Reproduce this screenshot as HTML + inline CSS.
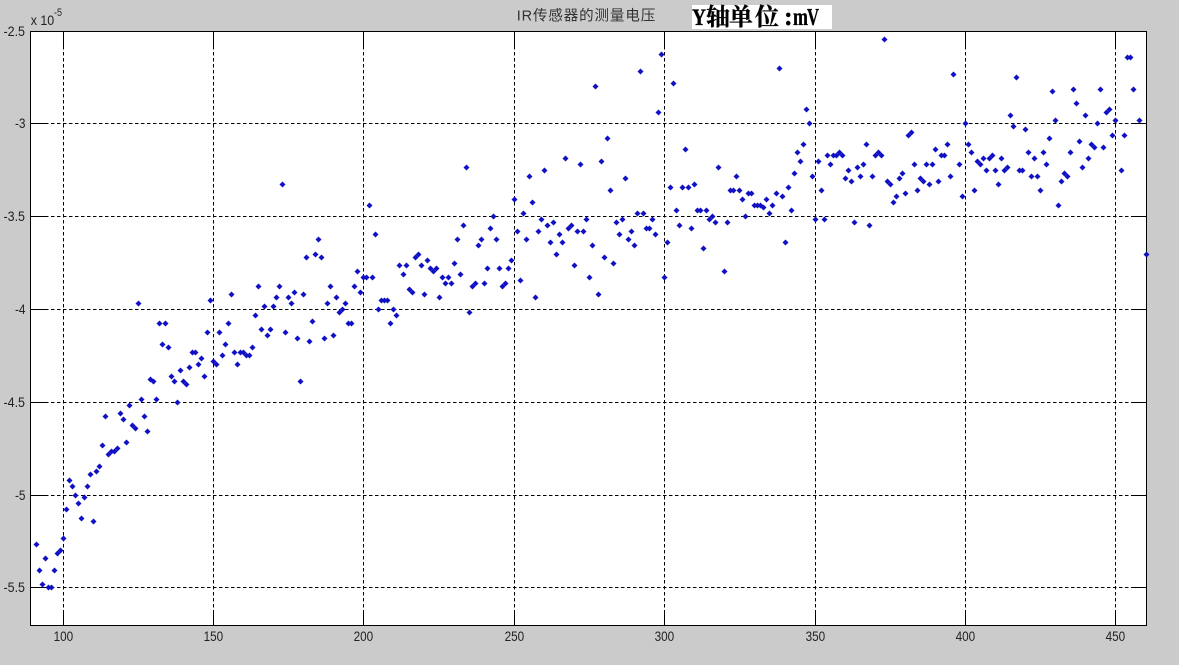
<!DOCTYPE html>
<html><head><meta charset="utf-8"><style>
html,body{margin:0;padding:0;background:#cbcbcb;width:1179px;height:665px;overflow:hidden}
svg{display:block;position:absolute;left:0;top:0}
.l{font-family:"Liberation Sans",sans-serif;font-size:13.5px;fill:#222}
.t{font-family:"Liberation Sans","Noto Sans CJK SC",sans-serif;font-size:14.5px;fill:#333}
.b{font-family:"Liberation Serif","Noto Serif CJK SC",serif;font-weight:bold;fill:#000;stroke:#000;stroke-width:.35}
</style></head><body>
<svg width="1179" height="665" viewBox="0 0 1179 665" xmlns="http://www.w3.org/2000/svg">
<defs><marker id="d" markerUnits="userSpaceOnUse" markerWidth="8" markerHeight="8" refX="4" refY="4" viewBox="0 0 8 8"><path d="M1 4 4 1 7 4 4 7z" fill="#1010c4"/></marker></defs>
<rect width="1179" height="665" fill="#cbcbcb"/>
<rect x="30.5" y="31.5" width="1116" height="594" fill="#fff"/>
<g stroke="#000" stroke-width="1" fill="none" stroke-dasharray="3.5 2.5">
<path d="M63.5 46V611M213.5 46V611M363.5 46V611M514.5 46V611M664.5 46V611M815.5 46V611M965.5 46V611M1115.5 46V611"/>
<path d="M45 123.5H1133M45 216.5H1133M45 309.5H1133M45 402.5H1133M45 495.5H1133M45 587.5H1133"/>
</g>
<g stroke="#000" stroke-width="1" fill="none">
<path d="M63.5 32V46M213.5 32V46M363.5 32V46M514.5 32V46M664.5 32V46M815.5 32V46M965.5 32V46M1115.5 32V46"/>
<path d="M63.5 611V625M213.5 611V625M363.5 611V625M514.5 611V625M664.5 611V625M815.5 611V625M965.5 611V625M1115.5 611V625"/>
<path d="M31 123.5H45M31 216.5H45M31 309.5H45M31 402.5H45M31 495.5H45M31 587.5H45"/>
<path d="M1133 123.5H1146M1133 216.5H1146M1133 309.5H1146M1133 402.5H1146M1133 495.5H1146M1133 587.5H1146"/>
<rect x="30.5" y="31.5" width="1116" height="594"/>
</g>
<polyline transform="translate(.2 .2)" fill="none" stroke="none" marker-start="url(#d)" marker-mid="url(#d)" marker-end="url(#d)" points="36.3,544.3 39.3,570.3 42.3,584.3 45.3,558.3 48.3,587.3 51.3,587.3 54.3,570.3 57.3,553.3 60.3,550.3 63.3,538.3 66.3,509.3 69.3,480.3 72.3,486.3 75.3,495.3 78.3,503.3 81.3,518.3 84.3,497.3 87.3,486.3 90.3,474.3 93.3,521.3 96.3,471.3 99.3,466.3 102.3,445.3 105.3,416.3 108.3,454.3 111.3,451.3 114.3,451.3 117.3,448.3 120.3,413.3 123.3,419.3 126.3,442.3 129.3,405.3 132.3,425.3 135.3,428.3 138.3,303.3 141.3,399.3 144.3,416.3 147.3,431.3 150.3,379.3 153.3,381.3 156.3,399.3 159.3,323.3 162.3,344.3 165.3,323.3 168.3,347.3 171.3,376.3 174.3,381.3 177.3,402.3 180.3,370.3 183.3,381.3 186.3,384.3 189.3,367.3 192.3,352.3 195.3,352.3 198.3,364.3 201.3,358.3 204.3,376.3 207.3,332.3 210.3,300.3 213.3,361.3 216.3,364.3 219.3,332.3 222.3,355.3 225.3,344.3 228.3,323.3 231.3,294.3 234.3,352.3 237.3,364.3 240.3,352.3 243.3,352.3 246.3,355.3 249.3,355.3 252.3,347.3 255.3,315.3 258.3,286.3 261.3,329.3 264.3,306.3 267.3,335.3 270.3,329.3 273.3,306.3 276.3,297.3 279.3,286.3 282.3,184.3 285.3,332.3 288.3,297.3 291.3,303.3 294.3,292.3 297.3,338.3 300.3,381.3 303.3,294.3 306.3,257.3 309.3,341.3 312.3,321.3 315.3,254.3 318.3,239.3 321.3,257.3 324.3,338.3 327.3,303.3 330.3,286.3 333.3,335.3 336.3,297.3 339.3,312.3 342.3,309.3 345.3,303.3 348.3,323.3 351.3,323.3 354.3,286.3 357.3,271.3 360.3,292.3 363.3,277.3 366.3,277.3 369.3,205.3 372.3,277.3 375.3,234.3 378.3,309.3 381.3,300.3 384.3,300.3 387.3,300.3 390.3,323.3 393.3,309.3 396.3,315.3 399.3,265.3 403.3,274.3 406.3,265.3 409.3,289.3 412.3,292.3 415.3,257.3 418.3,254.3 421.3,265.3 424.3,294.3 427.3,260.3 430.3,268.3 433.3,271.3 436.3,268.3 439.3,297.3 442.3,277.3 445.3,283.3 448.3,277.3 451.3,283.3 454.3,263.3 457.3,239.3 460.3,274.3 463.3,225.3 466.3,167.3 469.3,312.3 472.3,286.3 475.3,283.3 478.3,245.3 481.3,239.3 484.3,283.3 487.3,268.3 490.3,228.3 493.3,216.3 496.3,239.3 499.3,268.3 502.3,286.3 505.3,283.3 508.3,268.3 511.3,260.3 514.3,199.3 517.3,231.3 520.3,280.3 523.3,213.3 526.3,239.3 529.3,176.3 532.3,202.3 535.3,297.3 538.3,231.3 541.3,219.3 544.3,170.3 547.3,225.3 550.3,242.3 553.3,222.3 556.3,254.3 559.3,234.3 562.3,242.3 565.3,158.3 568.3,228.3 571.3,225.3 574.3,265.3 577.3,231.3 580.3,164.3 583.3,231.3 586.3,219.3 589.3,277.3 592.3,245.3 595.3,86.3 598.3,294.3 601.3,161.3 604.3,257.3 607.3,138.3 610.3,190.3 613.3,263.3 616.3,222.3 619.3,234.3 622.3,219.3 625.3,178.3 628.3,239.3 631.3,231.3 634.3,245.3 637.3,213.3 640.3,71.3 643.3,213.3 646.3,228.3 649.3,228.3 652.3,219.3 655.3,234.3 658.3,112.3 661.3,54.3 664.3,277.3 667.3,242.3 670.3,187.3 673.3,83.3 676.3,210.3 679.3,225.3 682.3,187.3 685.3,149.3 688.3,187.3 691.3,228.3 694.3,184.3 697.3,210.3 700.3,210.3 703.3,248.3 706.3,210.3 709.3,219.3 712.3,216.3 715.3,222.3 718.3,167.3 724.3,271.3 727.3,222.3 730.3,190.3 733.3,190.3 736.3,176.3 739.3,190.3 742.3,199.3 745.3,216.3 748.3,193.3 751.3,193.3 754.3,205.3 757.3,205.3 760.3,205.3 763.3,207.3 766.3,199.3 769.3,213.3 772.3,205.3 776.3,193.3 779.3,68.3 782.3,196.3 785.3,242.3 788.3,187.3 791.3,210.3 794.3,173.3 797.3,152.3 800.3,161.3 803.3,144.3 806.3,109.3 809.3,123.3 812.3,176.3 815.3,219.3 818.3,161.3 821.3,190.3 824.3,219.3 827.3,155.3 830.3,164.3 833.3,155.3 836.3,155.3 839.3,152.3 842.3,155.3 845.3,178.3 848.3,170.3 851.3,181.3 854.3,222.3 857.3,167.3 860.3,176.3 863.3,164.3 866.3,144.3 869.3,225.3 872.3,176.3 875.3,155.3 878.3,152.3 881.3,155.3 884.3,39.3 887.3,181.3 890.3,184.3 893.3,202.3 896.3,196.3 899.3,178.3 902.3,173.3 905.3,193.3 908.3,135.3 911.3,132.3 914.3,164.3 917.3,190.3 920.3,178.3 923.3,181.3 926.3,164.3 929.3,184.3 932.3,164.3 935.3,149.3 938.3,181.3 941.3,155.3 944.3,155.3 947.3,144.3 950.3,176.3 953.3,74.3 959.3,164.3 962.3,196.3 965.3,123.3 968.3,144.3 971.3,152.3 974.3,190.3 977.3,161.3 980.3,164.3 983.3,158.3 986.3,170.3 989.3,158.3 992.3,155.3 995.3,170.3 998.3,184.3 1001.3,158.3 1004.3,170.3 1007.3,167.3 1010.3,115.3 1013.3,126.3 1016.3,77.3 1019.3,170.3 1022.3,170.3 1025.3,129.3 1028.3,152.3 1031.3,176.3 1034.3,158.3 1037.3,176.3 1040.3,190.3 1043.3,152.3 1046.3,164.3 1049.3,138.3 1052.3,91.3 1055.3,120.3 1058.3,205.3 1061.3,181.3 1064.3,173.3 1067.3,176.3 1070.3,152.3 1073.3,89.3 1076.3,103.3 1079.3,141.3 1082.3,167.3 1085.3,115.3 1088.3,158.3 1091.3,144.3 1094.3,147.3 1097.3,123.3 1100.3,89.3 1103.3,147.3 1106.3,112.3 1109.3,109.3 1112.3,135.3 1115.3,120.3 1121.3,170.3 1124.3,135.3 1127.3,57.3 1130.3,57.3 1133.3,89.3 1139.3,120.3 1146.3,254.3"/>
<g class="l">
<text x="3.5" y="36" textLength="21.5" lengthAdjust="spacingAndGlyphs">-2.5</text>
<text x="15" y="128" textLength="10.5" lengthAdjust="spacingAndGlyphs">-3</text>
<text x="3.5" y="221" textLength="21.5" lengthAdjust="spacingAndGlyphs">-3.5</text>
<text x="15" y="314" textLength="10.5" lengthAdjust="spacingAndGlyphs">-4</text>
<text x="3.5" y="407" textLength="21.5" lengthAdjust="spacingAndGlyphs">-4.5</text>
<text x="15" y="500" textLength="10.5" lengthAdjust="spacingAndGlyphs">-5</text>
<text x="3.5" y="592" textLength="21.5" lengthAdjust="spacingAndGlyphs">-5.5</text>
<text x="53.6" y="641" textLength="19.6" lengthAdjust="spacingAndGlyphs">100</text>
<text x="203.6" y="641" textLength="19.6" lengthAdjust="spacingAndGlyphs">150</text>
<text x="353.6" y="641" textLength="19.6" lengthAdjust="spacingAndGlyphs">200</text>
<text x="504.6" y="641" textLength="19.6" lengthAdjust="spacingAndGlyphs">250</text>
<text x="654.6" y="641" textLength="19.6" lengthAdjust="spacingAndGlyphs">300</text>
<text x="805.6" y="641" textLength="19.6" lengthAdjust="spacingAndGlyphs">350</text>
<text x="955.6" y="641" textLength="19.6" lengthAdjust="spacingAndGlyphs">400</text>
<text x="1105.6" y="641" textLength="19.6" lengthAdjust="spacingAndGlyphs">450</text>
<text x="30.7" y="25" textLength="23.5" lengthAdjust="spacingAndGlyphs">x 10</text>
<text x="54" y="16" textLength="8" lengthAdjust="spacingAndGlyphs" style="font-size:11px">-5</text>
</g>
<text class="t" x="516.7" y="20.5" textLength="138.5" lengthAdjust="spacing">IR传感器的测量电压</text>
<rect x="692" y="5" width="140" height="24" fill="#fff"/>
<g class="b">
<text x="692" y="25" font-size="23" textLength="14" lengthAdjust="spacingAndGlyphs">Y</text>
<text x="706" y="25" font-size="24" font-family="Noto Serif CJK SC,serif">轴</text>
<text x="729" y="25" font-size="24" font-family="Noto Serif CJK SC,serif">单</text>
<text x="755" y="25" font-size="24" font-family="Noto Serif CJK SC,serif">位</text>
<text x="784" y="25" font-size="26">:</text>
<text x="793" y="25" font-size="25" textLength="15" lengthAdjust="spacingAndGlyphs">m</text>
<text x="807" y="25" font-size="24" textLength="12" lengthAdjust="spacingAndGlyphs">V</text>
</g>
</svg>
</body></html>
